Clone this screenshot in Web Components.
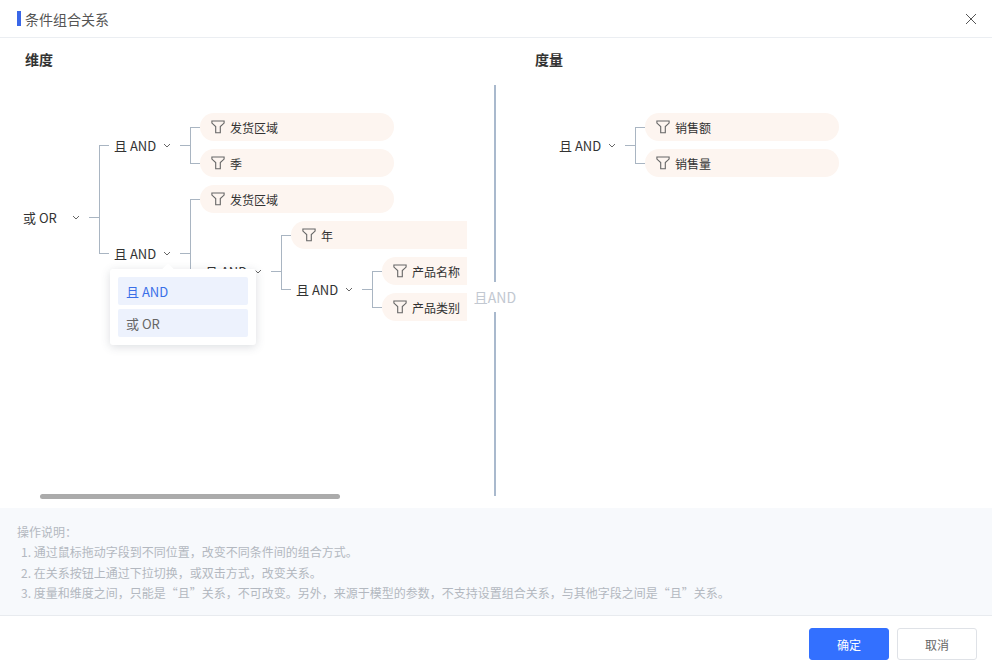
<!DOCTYPE html>
<html lang="zh">
<head>
<meta charset="utf-8">
<title>条件组合关系</title>
<style>
  html, body { margin: 0; height: 100%; background: #fff; }
  body { font-family: "Noto Sans CJK SC", "Liberation Sans", sans-serif; font-size: 12px; color: #333; }
</style>
</head>
<body>
<rel-dialog heading="条件组合关系">
  <rel-pane slot="left" heading="维度" scroll>
    <cond-group label="或 OR" root>
      <cond-group label="且 AND">
        <cond-pill>发货区域</cond-pill>
        <cond-pill>季</cond-pill>
      </cond-group>
      <cond-group label="且 AND" menu="且 AND|或 OR">
        <cond-pill>发货区域</cond-pill>
        <cond-group label="且 AND">
          <cond-pill>年</cond-pill>
          <cond-group label="且 AND">
            <cond-pill>产品名称</cond-pill>
            <cond-pill>产品类别</cond-pill>
          </cond-group>
        </cond-group>
      </cond-group>
    </cond-group>
  </rel-pane>
  <rel-divider slot="divider">且AND</rel-divider>
  <rel-pane slot="right" heading="度量">
    <cond-group label="且 AND" root>
      <cond-pill>销售额</cond-pill>
      <cond-pill>销售量</cond-pill>
    </cond-group>
  </rel-pane>
  <rel-notes slot="notes" heading="操作说明：">
    <div>1. 通过鼠标拖动字段到不同位置，改变不同条件间的组合方式。</div>
    <div>2. 在关系按钮上通过下拉切换，或双击方式，改变关系。</div>
    <div>3. 度量和维度之间，只能是“且”关系，不可改变。另外，来源于模型的参数，不支持设置组合关系，与其他字段之间是“且”关系。</div>
  </rel-notes>
  <rel-button slot="footer" primary>确定</rel-button>
  <rel-button slot="footer">取消</rel-button>
</rel-dialog>

<script>
const LINE = '#a9b5c2';

// tree connector shared by pills and groups that sit inside a group
const connector = `
  :host { position: relative; margin-left: 10px; }
  :host::before {
    content: '';
    position: absolute;
    left: -10px;
    top: 50%;
    width: 10px;
    height: 1px;
    background: ${LINE};
  }
  :host::after {
    content: '';
    position: absolute;
    left: -10px;
    width: 1px;
    top: -8px;
    bottom: 0;
    background: ${LINE};
  }
  :host(:first-child)::after { top: 50%; bottom: -8px; }
  :host(:last-child)::after { top: -8px; bottom: 50%; }
`;

class RelDialog extends HTMLElement {
  connectedCallback() {
    this.attachShadow({ mode: 'open' });
    this.shadowRoot.innerHTML = `
      <style>
        :host { display: flex; flex-direction: column; width: 992px; height: 671px; overflow: hidden; }
        header {
          display: flex;
          align-items: center;
          justify-content: space-between;
          height: 37px;
          padding: 0 17px;
          border-bottom: 1px solid #ebeef2;
          color: #555;
          font-size: 14px;
        }
        h1 { display: flex; align-items: center; gap: 4px; margin: 0; font: inherit; }
        h1::before { content: ''; width: 4px; height: 15px; background: #3a67e8; }
        svg { display: block; }
        .close { margin-right: -2px; }
        main { display: grid; grid-template-columns: 494px 2px 1fr; height: 470px; }
        footer { display: flex; justify-content: flex-end; gap: 8px; padding: 12px 15px 0; }
      </style>
      <header>
        <h1>${this.getAttribute('heading')}</h1>
        <svg class="close" width="12" height="12" viewBox="0 0 12 12"><path d="M1 1l10 10M11 1L1 11" stroke="#555" stroke-width="1" fill="none"/></svg>
      </header>
      <main>
        <slot name="left"></slot>
        <slot name="divider"></slot>
        <slot name="right"></slot>
      </main>
      <slot name="notes"></slot>
      <footer><slot name="footer"></slot></footer>
    `;
  }
}

class RelPane extends HTMLElement {
  connectedCallback() {
    this.attachShadow({ mode: 'open' });
    const scroll = this.hasAttribute('scroll');
    this.shadowRoot.innerHTML = `
      <style>
        :host { display: block; position: relative; min-width: 0; }
        h2 { margin: 0; padding: 11px 0 0 25px; font-size: 14px; line-height: 20px; font-weight: 700; color: #333; }
        :host([slot="right"]) h2 { padding-left: 39px; }
        .tree { margin: 44px 27px 0 18px; overflow: hidden; height: 330px; }
        :host([slot="right"]) .tree { margin: 44px 0 0 58px; }
        .thumb { position: absolute; left: 40px; top: 456px; width: 300px; height: 5px; border-radius: 3px; background: #ababab; }
      </style>
      <h2>${this.getAttribute('heading')}</h2>
      <div class="tree"><slot></slot></div>
      ${scroll ? '<div class="thumb"></div>' : ''}
    `;
  }
}

class RelDivider extends HTMLElement {
  connectedCallback() {
    this.attachShadow({ mode: 'open' });
    this.shadowRoot.innerHTML = `
      <style>
        :host { display: block; position: relative; margin: 47px 0 12px; background: #a9b9cd; }
        span {
          position: absolute;
          left: 50%;
          top: 197px;
          transform: translateX(-50%);
          padding: 4px 0;
          line-height: 22px;
          background: #fff;
          color: #c2c8d1;
          font-size: 14px;
          white-space: nowrap;
        }
      </style>
      <span><slot></slot></span>
    `;
  }
}

class CondGroup extends HTMLElement {
  connectedCallback() {
    this.attachShadow({ mode: 'open' });
    const options = (this.getAttribute('menu') || '').split('|').filter(Boolean);
    const menu = options.length
      ? `<rel-menu>${options.map((o, i) => `<rel-option ${i === 0 ? 'active' : ''}>${o}</rel-option>`).join('')}</rel-menu>`
      : '';
    this.shadowRoot.innerHTML = `
      <style>
        ${this.hasAttribute('root') ? ':host { position: relative; }' : connector}
        :host { display: flex; align-items: center; width: max-content; }
        .label {
          position: relative;
          box-sizing: border-box;
          display: flex;
          align-items: center;
          justify-content: space-between;
          width: 71px;
          height: 28px;
          padding: 0 9px 0 5px;
          font-size: 13px;
          color: #333;
        }
        .stub { width: 10px; height: 1px; background: ${LINE}; }
        .kids { display: flex; flex-direction: column; gap: 8px; }
        svg { display: block; }
      </style>
      <div class="label">
        <span>${this.getAttribute('label')}</span>
        <svg width="8" height="5" viewBox="0 0 8 5"><path d="M1 1l3 3 3-3" fill="none" stroke="#666" stroke-width="1"/></svg>
        ${menu}
      </div>
      <div class="stub"></div>
      <div class="kids"><slot></slot></div>
    `;
  }
}

class CondPill extends HTMLElement {
  connectedCallback() {
    this.attachShadow({ mode: 'open' });
    this.shadowRoot.innerHTML = `
      <style>
        ${connector}
        :host {
          display: flex;
          align-items: center;
          gap: 5px;
          box-sizing: border-box;
          width: 194px;
          height: 28px;
          padding-left: 11px;
          border-radius: 14px;
          background: #fdf5f0;
          font-size: 12px;
          color: #333;
        }
        svg { display: block; margin-top: -1px; }
      </style>
      <svg width="14" height="14" viewBox="0 0 14 14"><path d="M.9 1h12.2v2.1L9.3 6.6v6.2H4.7V6.6L.9 3.1z" fill="none" stroke="#666" stroke-width="1.1"/></svg>
      <span><slot></slot></span>
    `;
  }
}

class RelMenu extends HTMLElement {
  connectedCallback() {
    this.attachShadow({ mode: 'open' });
    this.shadowRoot.innerHTML = `
      <style>
        :host {
          position: absolute;
          z-index: 10;
          left: 1px;
          top: 30px;
          box-sizing: border-box;
          display: flex;
          flex-direction: column;
          gap: 4px;
          width: 146px;
          padding: 8px;
          border-radius: 3px;
          background: #fff;
          box-shadow: 0 2px 10px rgba(60, 70, 90, .18);
        }
        :host::before {
          content: '';
          position: absolute;
          left: 54px;
          top: -4px;
          width: 8px;
          height: 8px;
          background: #fff;
          transform: rotate(45deg);
        }
      </style>
      <slot></slot>
    `;
  }
}

class RelOption extends HTMLElement {
  connectedCallback() {
    this.attachShadow({ mode: 'open' });
    this.shadowRoot.innerHTML = `
      <style>
        :host {
          position: relative;
          display: flex;
          align-items: center;
          height: 28px;
          padding-left: 8px;
          border-radius: 2px;
          background: #edf2fd;
          font-size: 13px;
          color: #666;
        }
        :host([active]) { color: #3a6fe8; }
      </style>
      <slot></slot>
    `;
  }
}

class RelNotes extends HTMLElement {
  connectedCallback() {
    this.attachShadow({ mode: 'open' });
    this.shadowRoot.innerHTML = `
      <style>
        :host {
          display: block;
          box-sizing: border-box;
          height: 108px;
          padding: 14px 17px 0;
          border-bottom: 1px solid #e8ebef;
          background: #f7f9fc;
          color: #b3b8c0;
          font-size: 12px;
          line-height: 20.4px;
        }
        .list { padding-left: 4px; }
      </style>
      <div>${this.getAttribute('heading')}</div>
      <div class="list"><slot></slot></div>
    `;
  }
}

class RelButton extends HTMLElement {
  connectedCallback() {
    this.attachShadow({ mode: 'open' });
    this.shadowRoot.innerHTML = `
      <style>
        :host {
          display: flex;
          align-items: center;
          justify-content: center;
          box-sizing: border-box;
          width: 80px;
          height: 32px;
          border: 1px solid #dfe2e7;
          border-radius: 3px;
          background: #fff;
          font-size: 12px;
          color: #666;
        }
        :host([primary]) { border-color: #3370ff; background: #3370ff; color: #fff; }
      </style>
      <slot></slot>
    `;
  }
}

customElements.define('rel-dialog', RelDialog);
customElements.define('rel-pane', RelPane);
customElements.define('rel-divider', RelDivider);
customElements.define('cond-group', CondGroup);
customElements.define('cond-pill', CondPill);
customElements.define('rel-menu', RelMenu);
customElements.define('rel-option', RelOption);
customElements.define('rel-notes', RelNotes);
customElements.define('rel-button', RelButton);
</script>
</body>
</html>
